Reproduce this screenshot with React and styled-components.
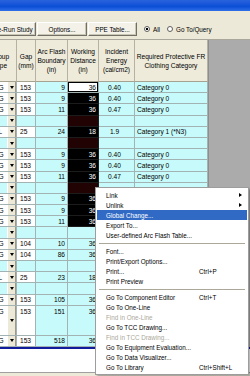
import React from "react";
import styled, { createGlobalStyle } from "styled-components";

const GlobalStyle = createGlobalStyle`
  html, body {
    margin: 0;
    padding: 0;
  }
  body {
    width: 250px;
    height: 376px;
    overflow: hidden;
    font-family: "Liberation Sans", Arial, sans-serif;
  }
`;

const Screen = styled.div`
  position: relative;
  width: 250px;
  height: 376px;
  overflow: hidden;
  display: flex;
  flex-direction: column;
  background: #ece9d8;
`;

const TitleBar = styled.div`
  height: 11px;
  flex-shrink: 0;
  background: linear-gradient(#2a62dc, #0b4fd6 60%, #2f6ee6);
`;

const Toolbar = styled.div`
  height: 29px;
  flex-shrink: 0;
  box-sizing: border-box;
  display: flex;
  align-items: flex-end;
  gap: 1px;
  padding-bottom: 3px;
  border-bottom: 1px solid #a9a79c;
`;

const ToolButton = styled.button`
  width: ${(p) => p.$w}px;
  height: 14px;
  margin-left: ${(p) => p.$shift || 0}px;
  flex-shrink: 0;
  box-sizing: border-box;
  padding: 0;
  font: 6.3px "Liberation Sans", Arial, sans-serif;
  color: #000;
  white-space: nowrap;
  background: #f3f1e8;
  border: 1px solid;
  border-color: #ffffff #716f64 #716f64 #ffffff;
  box-shadow: inset -1px -1px 0 #c9c6b6;
`;

const RadioLabel = styled.label`
  height: 14px;
  display: flex;
  align-items: center;
  gap: 3px;
  margin-left: ${(p) => p.$gap}px;
  font: 6.3px "Liberation Sans", Arial, sans-serif;
  color: #000;
  white-space: nowrap;
`;

const RadioDot = styled.span`
  width: 6px;
  height: 6px;
  box-sizing: border-box;
  border-radius: 50%;
  border: 1px solid #5f5f5f;
  background: ${(p) => (p.$checked ? "radial-gradient(#000 0 1.2px, #fff 1.4px)" : "#fff")};
`;

const Body = styled.div`
  height: 307.2px;
  flex-shrink: 0;
  display: flex;
`;

const Grid = styled.div`
  width: 208px;
  flex-shrink: 0;
  display: flex;
  flex-direction: column;
  font: 6.6px "Liberation Sans", Arial, sans-serif;
  color: #000;
`;

const Workspace = styled.div`
  flex: 1;
  background: #ababab;
  border-left: 1px solid #8e8e8e;
`;

const COLS = "17px 19px 32px 31px 36px 73px";

const HeaderRow = styled.div`
  display: grid;
  grid-template-columns: ${COLS};
  height: 42px;
  background: #eeebdb;
`;

const HeaderCell = styled.div`
  box-sizing: border-box;
  display: flex;
  flex-direction: column;
  align-items: center;
  justify-content: center;
  overflow: hidden;
  line-height: 9px;
  text-align: center;
  white-space: nowrap;
  border-right: 1px solid #b5b2a3;
  border-bottom: 1px solid #a5a292;
`;

const HeaderClip = styled.div`
  width: 30px;
  margin-left: -15px;
  align-self: flex-start;
  text-align: center;
`;

const Row = styled.div`
  display: grid;
  grid-template-columns: ${COLS};
  height: ${(p) => p.$h}px;
`;

const Cell = styled.div`
  box-sizing: border-box;
  display: flex;
  align-items: ${(p) => (p.$top ? "flex-start" : "center")};
  padding-top: ${(p) => (p.$top ? 2 : 0)}px;
  justify-content: ${(p) =>
    p.$align === "right" ? "flex-end" : p.$align === "center" ? "center" : "flex-start"};
  padding-left: ${(p) => p.$pl || 0}px;
  padding-right: ${(p) => p.$pr || 0}px;
  overflow: hidden;
  white-space: nowrap;
  background: ${(p) => p.$bg || "#c7fbfb"};
  color: ${(p) => p.$fg || "#000"};
  border-right: 1px solid ${(p) => p.$line || "#a3b2b2"};
  border-bottom: 1px solid ${(p) => p.$line || "#a3b2b2"};
  box-shadow: ${(p) => (p.$edit ? "inset 0 0 0 1px #000" : "none")};
`;

const TypeCell = styled.div`
  box-sizing: border-box;
  display: flex;
  border-right: 1px solid #a3b2b2;
  border-bottom: 1px solid #a3b2b2;
`;

const TypeText = styled.div`
  width: 7px;
  overflow: hidden;
  background: ${(p) => (p.$empty ? "#c7fbfb" : "#fff")};
  display: flex;
  align-items: ${(p) => (p.$top ? "flex-start" : "center")};
  padding-top: ${(p) => (p.$top ? 2 : 0)}px;
  box-sizing: border-box;
  text-indent: -1.5px;
`;

const DropButton = styled.div`
  width: 9px;
  box-sizing: border-box;
  background: #ece9d8;
  border-left: 1px solid #fff;
  border-right: 1px solid #9d9a8a;
  display: flex;
  align-items: center;
  justify-content: center;

  &::after {
    content: "";
    border-left: 2.5px solid transparent;
    border-right: 2.5px solid transparent;
    border-top: 3px solid #000;
  }
`;

const BlueLine = styled.div`
  height: 2px;
  flex-shrink: 0;
  background: #101c9c;
`;

const Blank = styled.div`
  flex: 1;
  background: #fff;
`;

const BottomStrip = styled.div`
  height: 3px;
  flex-shrink: 0;
  border-top: 1px solid #a0a0a0;
  background: #ece9d8;
`;

const Menu = styled.div`
  position: absolute;
  left: 95px;
  top: 187px;
  width: 154px;
  box-sizing: border-box;
  padding: 2px 1px;
  background: #fff;
  border: 1px solid #9d9d9d;
  box-shadow: 2px 2px 2px rgba(0, 0, 0, 0.3);
  font: 6.3px "Liberation Sans", Arial, sans-serif;
`;

const MenuItem = styled.div`
  height: 10px;
  display: flex;
  align-items: center;
  padding: 0 3px 0 9px;
  white-space: nowrap;
  color: ${(p) => (p.$disabled ? "#aca899" : p.$active ? "#fff" : "#000")};
  background: ${(p) => (p.$active ? "#316ac5" : "transparent")};
`;

const Shortcut = styled.span`
  margin-left: auto;
  width: 45px;
`;

const SubArrow = styled.span`
  margin-left: auto;
  margin-right: 2px;
  border-top: 2.5px solid transparent;
  border-bottom: 2.5px solid transparent;
  border-left: 3px solid currentColor;
`;

const Separator = styled.div`
  height: 6px;
  display: flex;
  align-items: center;

  &::after {
    content: "";
    flex: 1;
    height: 1px;
    margin: 0 2px;
    background: #aca899;
  }
`;

const rows = [
  { t: "G", gap: "153", arc: "9", wd: "36", ie: "0.40", cat: "Category 0", m: "edit" },
  { t: "G", gap: "153", arc: "9", wd: "36", ie: "0.40", cat: "Category 0", m: "sel" },
  { t: "G", gap: "153", arc: "11", wd: "36", ie: "0.47", cat: "Category 0", m: "sel" },
  { m: "selEmpty" },
  { t: "L", gap: "25", arc: "24", wd: "18", ie: "1.9", cat: "Category 1 (*N3)", m: "sel" },
  { m: "selEmpty" },
  { t: "G", gap: "153", arc: "9", wd: "36", ie: "0.40", cat: "Category 0", m: "sel" },
  { t: "G", gap: "153", arc: "9", wd: "36", ie: "0.40", cat: "Category 0", m: "sel" },
  { t: "G", gap: "153", arc: "11", wd: "36", ie: "0.47", cat: "Category 0", m: "sel" },
  { m: "selEmpty" },
  { t: "G", gap: "153", arc: "9", wd: "36", ie: "0.40", cat: "Category 0", m: "sel" },
  { t: "G", gap: "153", arc: "9", wd: "36", ie: "0.40", cat: "Category 0", m: "sel" },
  { t: "G", gap: "153", arc: "11", wd: "36", ie: "0.47", cat: "Category 0", m: "sel" },
  {},
  { t: "G", gap: "104", arc: "10", wd: "36", ie: "0.43", cat: "Category 0" },
  { t: "G", gap: "104", arc: "86", wd: "36", ie: "3.6", cat: "Category 1" },
  {},
  { t: "L", gap: "25", arc: "23", wd: "18", ie: "1.8", cat: "Category 1 (*N3)" },
  {},
  { t: "G", gap: "153", arc: "105", wd: "36", ie: "4.7", cat: "Category 2" },
  { t: "G", gap: "153", arc: "151", wd: "36", ie: "6.8", cat: "Category 2", h: 30 },
  { t: "G", gap: "153", arc: "518", wd: "36", ie: "36", cat: "Category 4" },
];

const menuItems = [
  { label: "Link", sub: true },
  { label: "Unlink", sub: true },
  { label: "Global Change...", active: true },
  { label: "Export To..." },
  { label: "User-defined Arc Flash Table..." },
  { sep: true },
  { label: "Font..." },
  { label: "Print/Export Options..." },
  { label: "Print...", key: "Ctrl+P" },
  { label: "Print Preview" },
  { sep: true },
  { label: "Go To Component Editor", key: "Ctrl+T" },
  { label: "Go To One-Line" },
  { label: "Find in One-Line", disabled: true },
  { label: "Go To TCC Drawing..." },
  { label: "Find in TCC Drawing...", disabled: true },
  { label: "Go To Equipment Evaluation..." },
  { label: "Go To Data Visualizer..." },
  { label: "Go To Library", key: "Ctrl+Shift+L" },
];

function workingCell(r, top) {
  if (r.m === "edit") {
    return { $bg: "#fff", $edit: true };
  }
  if (r.m === "sel") {
    return { $bg: "#000", $fg: "#fff", $line: "#1c1c1c" };
  }
  if (r.m === "selEmpty") {
    return { $bg: "#220303", $line: "#1c1c1c" };
  }
  return { $top: top };
}

const DataRow = ({ r }) => {
  const empty = !r.gap;
  const top = !!r.h;
  return (
    <Row $h={r.h || 11.2}>
      <TypeCell>
        <TypeText $empty={empty} $top={top}>{r.t}</TypeText>
        <DropButton />
      </TypeCell>
      <Cell $bg={empty ? undefined : "#fff"} $pl={3} $top={top}>
        {r.gap}
      </Cell>
      <Cell $align="right" $pr={2} $top={top}>
        {r.arc}
      </Cell>
      <Cell $align="right" $pr={2} {...workingCell(r, top)}>
        {r.wd}
      </Cell>
      <Cell $align="center" $pr={4} $top={top}>
        {r.ie}
      </Cell>
      <Cell $pl={2} $top={top}>
        {r.cat}
      </Cell>
    </Row>
  );
};

const App = () => {
  return (
    <Screen>
      <GlobalStyle />
      <TitleBar />
      <Toolbar>
        <ToolButton $w={46} $shift={-10}>Re-Run Study</ToolButton>
        <ToolButton $w={50}>Options...</ToolButton>
        <ToolButton $w={49}>PPE Table...</ToolButton>
        <RadioLabel $gap={6}>
          <RadioDot $checked />
          All
        </RadioLabel>
        <RadioLabel $gap={6}>
          <RadioDot />
          Go To/Query
        </RadioLabel>
      </Toolbar>
      <Body>
        <Grid>
          <HeaderRow>
            <HeaderCell>
              <HeaderClip>Group</HeaderClip>
              <HeaderClip>Type</HeaderClip>
            </HeaderCell>
            <HeaderCell>
              <span>Gap</span>
              <span>(mm)</span>
            </HeaderCell>
            <HeaderCell>
              <span>Arc Flash</span>
              <span>Boundary</span>
              <span>(in)</span>
            </HeaderCell>
            <HeaderCell>
              <span>Working</span>
              <span>Distance</span>
              <span>(in)</span>
            </HeaderCell>
            <HeaderCell>
              <span>Incident</span>
              <span>Energy</span>
              <span>(cal/cm2)</span>
            </HeaderCell>
            <HeaderCell>
              <span>Required Protective FR</span>
              <span>Clothing Category</span>
            </HeaderCell>
          </HeaderRow>
          {rows.map((r, i) => (
            <DataRow key={i} r={r} />
          ))}
        </Grid>
        <Workspace />
      </Body>
      <BlueLine />
      <Blank />
      <BottomStrip />
      <Menu>
        {menuItems.map((it, i) =>
          it.sep ? (
            <Separator key={i} />
          ) : (
            <MenuItem key={i} $active={it.active} $disabled={it.disabled}>
              {it.label}
              {it.key && <Shortcut>{it.key}</Shortcut>}
              {it.sub && <SubArrow />}
            </MenuItem>
          )
        )}
      </Menu>
    </Screen>
  );
};

export default App;
